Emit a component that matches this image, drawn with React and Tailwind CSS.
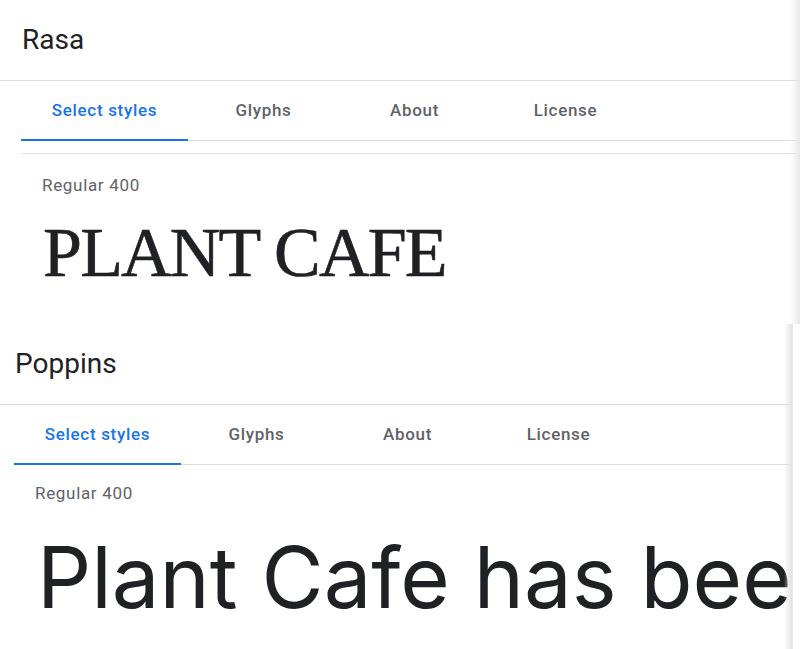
import React from "react";

const tabs = ["Select styles", "Glyphs", "About", "License"];

function Tabs({ offset }) {
  return (
    <div className={`flex border-b border-[#dadce0] ${offset}`}>
      {tabs.map((t, i) => (
        <div
          key={t}
          className={`relative flex h-[59px] items-center justify-center text-[17px] font-medium tracking-[0.04em] ${
            i === 0 ? "w-[167px] text-[#1a73e8]" : "w-[151px] text-[#5f6368]"
          }`}
        >
          {t}
          {i === 0 && (
            <div className="absolute bottom-[-1px] left-0 right-0 h-[2px] bg-[#1a73e8]" />
          )}
        </div>
      ))}
    </div>
  );
}

export default function App() {
  return (
    <div className="h-[649px] w-[800px] overflow-hidden bg-white font-['Roboto','Liberation_Sans',sans-serif] text-[#202124]">
      {/* Rasa */}
      <div className="relative h-[324px] w-[800px] overflow-hidden">
        <div className="flex h-[81px] items-center border-b border-[#dadce0] pl-[22px] text-[28px] text-[#202124]">
          Rasa
        </div>
        <Tabs offset="ml-[21px]" />
        <div className="ml-[21px] mt-[12px] h-px bg-[#e3e3e3]" />
        <div className="ml-[42px] mt-[19px] text-[17px] leading-[24px] tracking-[0.04em] text-[#5f6368]">
          Regular 400
        </div>
        <div className="ml-[43px] mt-[21px] whitespace-nowrap font-['Liberation_Serif',serif] text-[70px] leading-[70px] tracking-[-1.8px] text-[#202124] [-webkit-text-stroke:0.6px_#202124]">
          PLANT CAFE
        </div>
        <div className="absolute bottom-0 right-0 top-0 w-[10px] bg-gradient-to-r from-white/0 to-[#e8e8e8]" />
      </div>

      {/* Poppins */}
      <div className="relative h-[325px] w-[793px] overflow-hidden border-r border-[#e6e6e6]">
        <div className="flex h-[81px] items-center border-b border-[#dadce0] pl-[15px] text-[28px] text-[#202124]">
          Poppins
        </div>
        <Tabs offset="ml-[14px]" />
        <div className="ml-[35px] mt-[16px] text-[17px] leading-[24px] tracking-[0.04em] text-[#5f6368]">
          Regular 400
        </div>
        <div className="ml-[37px] mt-[30px] whitespace-nowrap font-['Inter','Noto_Sans',sans-serif] text-[85px] leading-[85px] text-[#202124]">
          Plant Cafe has bee
        </div>
        <div className="absolute bottom-0 right-0 top-0 w-[8px] bg-gradient-to-r from-white/0 to-[#e2e2e2]" />
      </div>
    </div>
  );
}
